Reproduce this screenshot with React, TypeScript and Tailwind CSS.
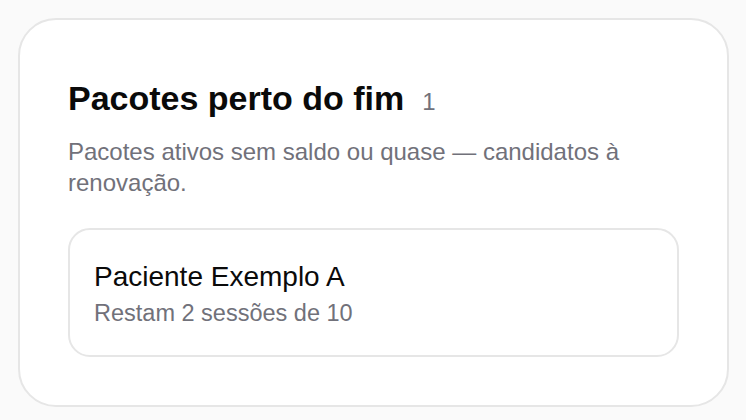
export default function App() {
  return (
    <main className="min-h-screen bg-[#fafafa] p-[18px] font-['Liberation_Sans',Arial,sans-serif]">
      <section className="w-[711px] rounded-[38px] border-2 border-[#e6e6e6] bg-white px-[48px] pt-[58px] pb-[48px]">
        <div className="flex items-baseline gap-[18px]">
          <h2 className="text-[34px] leading-[40px] font-bold text-[#0a0a0a]">Pacotes perto do fim</h2>
          <span className="text-[24px] text-[#71717a]">1</span>
        </div>
        <p className="mt-[16px] text-[24px] leading-[31px] text-[#71717a]">
          Pacotes ativos sem saldo ou quase — candidatos à renovação.
        </p>
        <div className="mt-[30px] rounded-[22px] border-2 border-[#e6e6e6] px-[24px] pt-[30px] pb-[27px]">
          <div className="text-[28px] leading-[34px] text-[#0a0a0a]">Paciente Exemplo A</div>
          <div className="mt-[4px] text-[23.5px] leading-[30px] text-[#71717a]">Restam 2 sessões de 10</div>
        </div>
      </section>
    </main>
  );
}
